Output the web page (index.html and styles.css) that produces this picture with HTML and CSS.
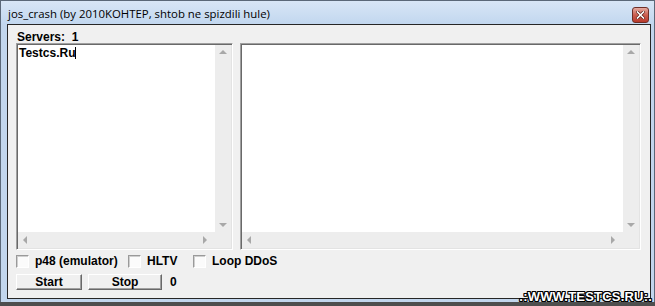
FILE: index.html
```html
<!DOCTYPE html>
<html lang="en">
<head>
  <meta charset="UTF-8" />
  <title>jos_crash</title>
  <link rel="stylesheet" href="styles.css">
</head>
<body>
  <div class="window">
    <div class="titlebar">
      <span class="title">jos_crash (by 2010KOHTEP, shtob ne spizdili hule)</span>
      <button class="close" aria-label="Close">
        <svg width="9" height="8" viewBox="0 0 9 8">
          <path d="M1.5 1 L7.5 7 M7.5 1 L1.5 7" stroke="#5a1d16" stroke-width="3" stroke-linecap="square" />
          <path d="M1.5 1 L7.5 7 M7.5 1 L1.5 7" stroke="#ffffff" stroke-width="1.6" stroke-linecap="square" />
        </svg>
      </button>
    </div>

    <div class="client">
      <div class="servers">Servers:&nbsp; 1</div>

      <div class="panes">
        <div class="box list">
          <div class="box-main">
            <div class="box-text">Testcs.Ru<span class="caret"></span></div>
            <div class="vscroll"><span class="arr up"></span><span class="arr down"></span></div>
          </div>
          <div class="hscroll">
            <div class="hs-track"><span class="arr left"></span><span class="arr right"></span></div>
            <div class="corner"></div>
          </div>
        </div>

        <div class="box memo">
          <div class="box-main">
            <div class="box-text"></div>
            <div class="vscroll"><span class="arr up"></span><span class="arr down"></span></div>
          </div>
          <div class="hscroll">
            <div class="hs-track"><span class="arr left"></span><span class="arr right"></span></div>
            <div class="corner"></div>
          </div>
        </div>
      </div>

      <div class="options">
        <label class="check w1"><span class="check-box"></span>p48 (emulator)</label>
        <label class="check w2"><span class="check-box"></span>HLTV</label>
        <label class="check"><span class="check-box"></span>Loop DDoS</label>
      </div>

      <div class="actions">
        <button class="btn start">Start</button>
        <button class="btn stop">Stop</button>
        <span class="count">0</span>
      </div>
    </div>

    <div class="shadow"></div>
    <div class="watermark">.:WWW.TESTCS.RU:.</div>
  </div>
</body>
</html>
```

FILE: styles.css
```css
body {
  margin: 0;
  width: 655px;
  height: 306px;
  overflow: hidden;
  font-family: "Liberation Sans", Arial, sans-serif;
}

.window {
  position: relative;
  box-sizing: border-box;
  width: 655px;
  height: 306px;
  display: flex;
  flex-direction: column;
  background: #c2d6ed;
  border: 1px solid #5b6878;
  border-bottom: 0;
}

.titlebar {
  flex: none;
  height: 23px;
  display: flex;
  align-items: flex-start;
  justify-content: space-between;
  padding: 0 5px 0 7px;
  background: linear-gradient(#d8e6f6, #c2d7ef);
}

.title {
  margin-top: 5px;
  font: 11.4px "Open Sans", "Noto Sans", sans-serif;
  line-height: 15px;
  color: #000;
}

.close {
  width: 17px;
  height: 16px;
  margin-top: 6px;
  padding: 0;
  box-sizing: border-box;
  display: flex;
  align-items: center;
  justify-content: center;
  border: 1px solid #6e2e27;
  border-radius: 3px;
  background: linear-gradient(#e4aba1, #cc5e50 50%, #b83a2c);
}

.client {
  flex: none;
  height: 275px;
  box-sizing: border-box;
  margin: 0 3px 0 6px;
  padding: 6px 8px 0;
  border: 1px solid #262626;
  background: #f0f0f0;
  font: bold 12px "Liberation Sans", Arial, sans-serif;
  color: #000;
}

.servers {
  height: 12px;
  line-height: 12px;
  margin-left: 1px;
}

.panes {
  display: flex;
  gap: 7px;
  height: 207px;
}

.box {
  box-sizing: border-box;
  display: flex;
  flex-direction: column;
  padding: 1px;
  background: #fff;
  border: 1px solid;
  border-color: #a0a0a0 #fff #fff #a0a0a0;
  box-shadow: inset 1px 1px #696969, inset -1px -1px #e3e3e3;
}

.list {
  width: 217px;
}

.memo {
  width: 401px;
}

.box-main {
  flex: 1;
  display: flex;
  min-height: 0;
}

.box-text {
  flex: 1;
  padding: 1px 0 0 1px;
  line-height: 14px;
}

.caret {
  display: inline-block;
  width: 1px;
  height: 12px;
  vertical-align: -2px;
  background: #000;
}

.vscroll {
  width: 16px;
  display: flex;
  flex-direction: column;
  justify-content: space-between;
  align-items: center;
  padding: 5px 0;
  box-sizing: border-box;
  background: #ededed;
}

.hscroll {
  flex: none;
  height: 16px;
  display: flex;
}

.hs-track {
  flex: 1;
  display: flex;
  align-items: center;
  justify-content: space-between;
  padding: 0 8px 0 5px;
  background: #ededed;
}

.corner {
  width: 16px;
  background: #ededed;
}

.arr {
  width: 0;
  height: 0;
}

.arr.up {
  border-left: 4px solid transparent;
  border-right: 4px solid transparent;
  border-bottom: 4px solid #a8a8a8;
}

.arr.down {
  border-left: 4px solid transparent;
  border-right: 4px solid transparent;
  border-top: 4px solid #a8a8a8;
}

.arr.left {
  border-top: 4px solid transparent;
  border-bottom: 4px solid transparent;
  border-right: 4px solid #a8a8a8;
}

.arr.right {
  border-top: 4px solid transparent;
  border-bottom: 4px solid transparent;
  border-left: 4px solid #a8a8a8;
}

.options {
  display: flex;
  height: 13px;
  margin-top: 5px;
  line-height: 13px;
}

.check {
  display: flex;
  gap: 6px;
}

.check.w1 {
  width: 112px;
}

.check.w2 {
  width: 65px;
}

.check-box {
  width: 13px;
  height: 13px;
  box-sizing: border-box;
  background: #fbfbfb;
  border: 1px solid;
  border-color: #9a9a9a #fff #fff #9a9a9a;
  box-shadow: inset 1px 1px #cfcfcf;
}

.actions {
  display: flex;
  align-items: center;
  margin-top: 6px;
}

.btn {
  height: 16px;
  padding: 0;
  box-sizing: border-box;
  font: inherit;
  line-height: 14px;
  color: #000;
  background: #f0f0f0;
  border: 1px solid;
  border-color: #fff #696969 #696969 #fff;
  box-shadow: inset -1px -1px #a0a0a0;
}

.start {
  width: 66px;
  margin-right: 6px;
}

.stop {
  width: 74px;
}

.count {
  margin-left: 8px;
}

.shadow {
  flex: none;
  height: 4px;
  margin: 3px -1px 0;
  background: #4e4e4e;
}

.watermark {
  position: absolute;
  right: 2px;
  bottom: 4px;
  font: bold 13px "Liberation Sans", Arial, sans-serif;
  line-height: 11px;
  letter-spacing: 0.2px;
  color: #fff;
  text-shadow: 1px 0 #000, -1px 0 #000, 0 1px #000, 0 -1px #000,
    1px 1px #000, -1px -1px #000, 1px -1px #000, -1px 1px #000;
}
```
